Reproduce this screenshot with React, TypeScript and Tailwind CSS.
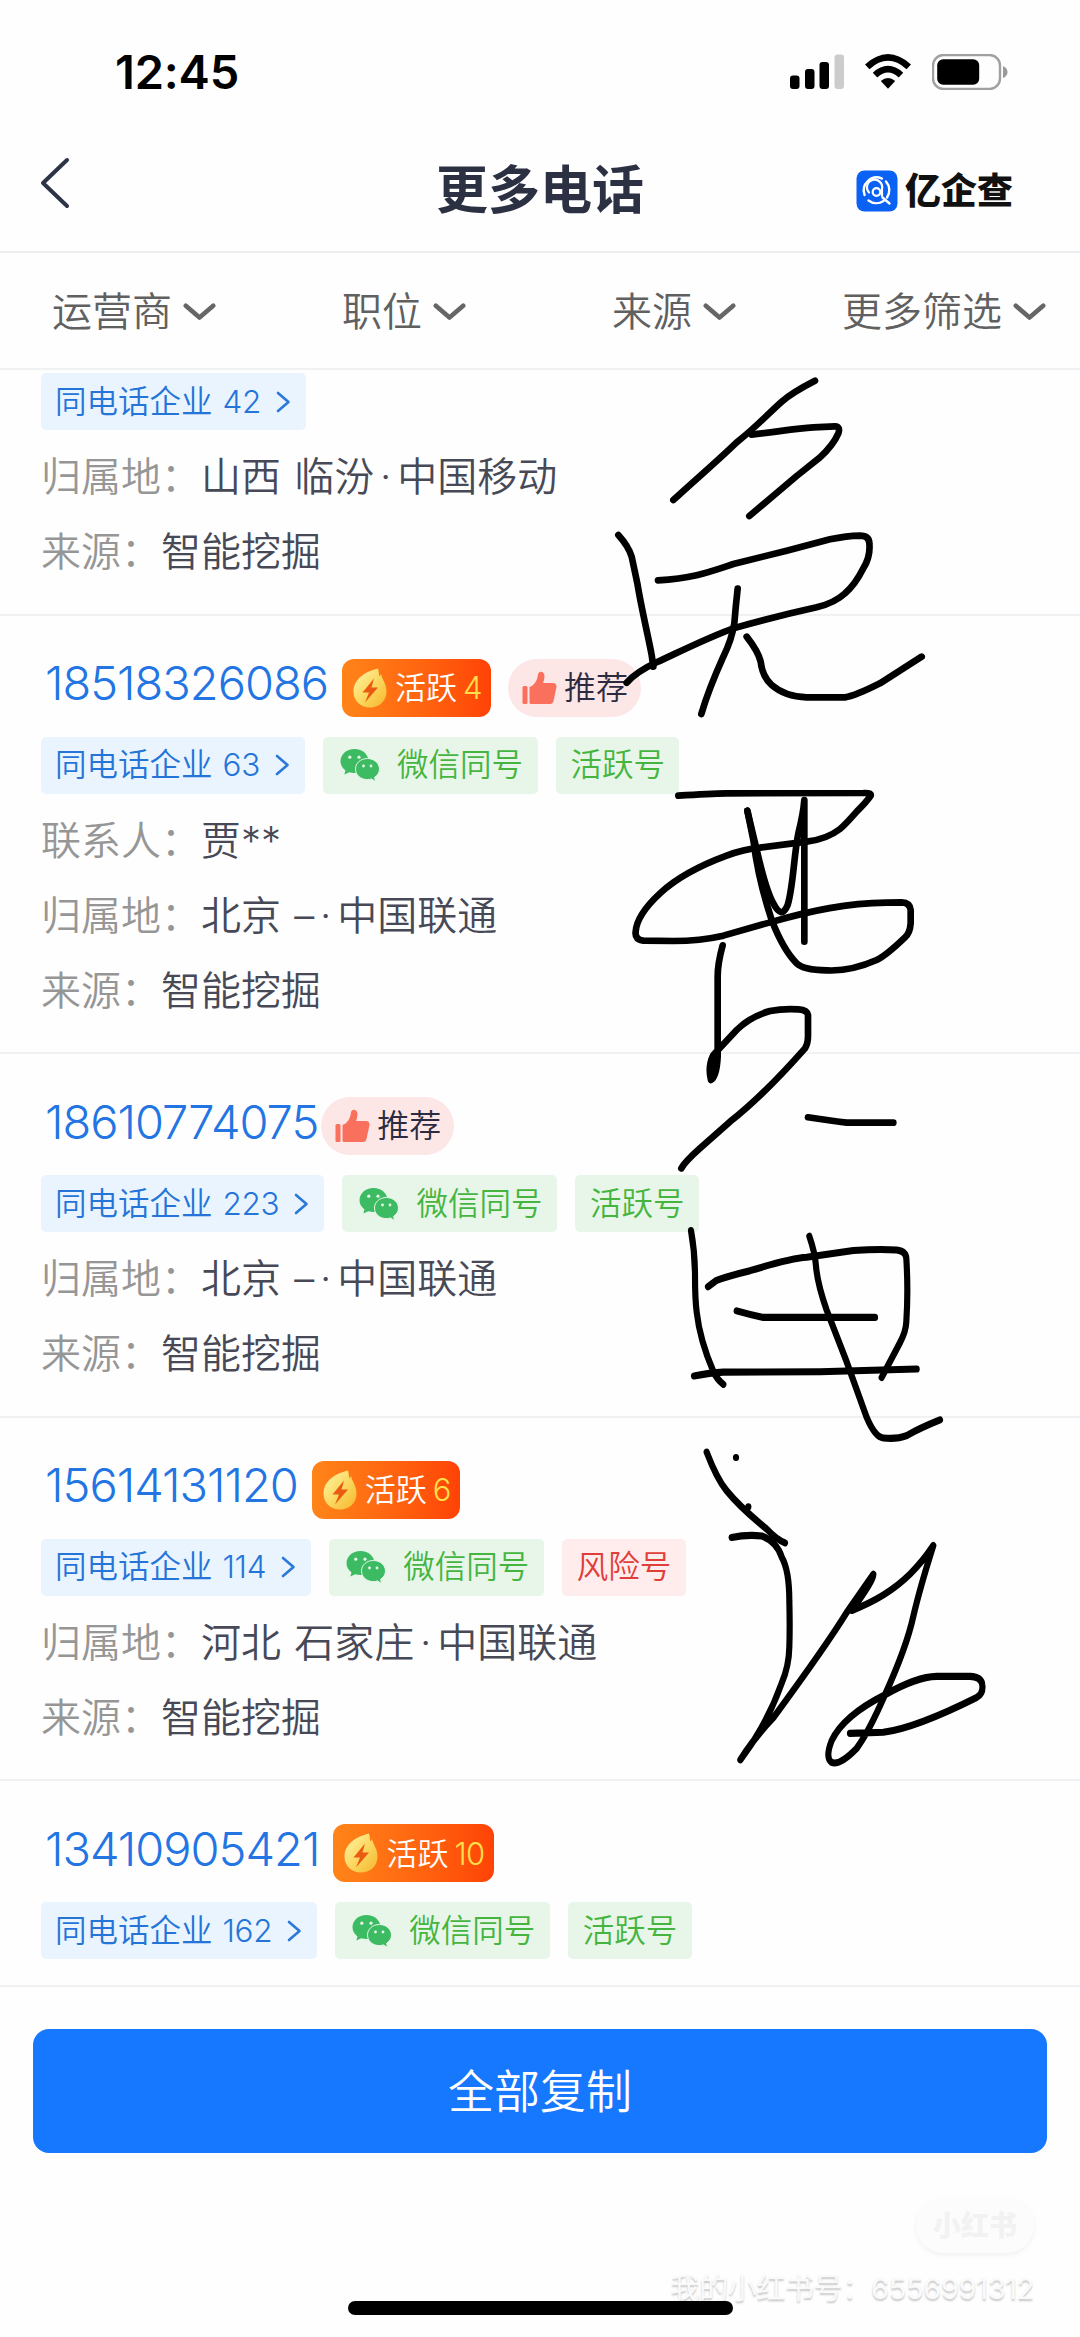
import React from 'react';

interface Tag {
  kind: 'wechat' | 'active' | 'risk';
  label: string;
}

interface PhoneRecord {
  phone?: string;
  active?: number;
  recommended?: boolean;
  companies: number;
  tags: Tag[];
  contact?: string;
  region?: string;
  carrier?: string;
  source?: string;
}

const WECHAT: Tag = { kind: 'wechat', label: '微信同号' };
const ACTIVE: Tag = { kind: 'active', label: '活跃号' };
const RISK: Tag = { kind: 'risk', label: '风险号' };

const filters = ['运营商', '职位', '来源', '更多筛选'];

const records: PhoneRecord[] = [
  { companies: 42, tags: [], region: '山西 临汾', carrier: '中国移动', source: '智能挖掘' },
  {
    phone: '18518326086',
    active: 4,
    recommended: true,
    companies: 63,
    tags: [WECHAT, ACTIVE],
    contact: '贾**',
    region: '北京 –',
    carrier: '中国联通',
    source: '智能挖掘',
  },
  {
    phone: '18610774075',
    recommended: true,
    companies: 223,
    tags: [WECHAT, ACTIVE],
    region: '北京 –',
    carrier: '中国联通',
    source: '智能挖掘',
  },
  {
    phone: '15614131120',
    active: 6,
    companies: 114,
    tags: [WECHAT, RISK],
    region: '河北 石家庄',
    carrier: '中国联通',
    source: '智能挖掘',
  },
  { phone: '13410905421', active: 10, companies: 162, tags: [WECHAT, ACTIVE] },
];

const StatusBar = () => (
  <div className="flex h-[144px] items-center justify-between pr-[72px] pl-[115px]">
    <span className="pb-[2px] text-[47px] leading-none font-semibold tracking-[-0.2px] text-black">12:45</span>
    <div className="flex items-center">
      <svg width="54" height="36" viewBox="0 0 54 36" className="mr-[21px]">
        <rect x="0" y="21.5" width="9.5" height="13.5" rx="3" />
        <rect x="15" y="15" width="9.5" height="20" rx="3" />
        <rect x="29.5" y="8" width="9.5" height="27" rx="3" />
        <rect x="44.5" y="0.5" width="9.5" height="34.5" rx="3" fill="#cccccc" />
      </svg>
      <svg width="46" height="36" viewBox="0 0 46 36" className="mr-[21px]">
        <path d="M0 10.5 Q23 -10.5 46 10.5 L41.5 15.2 Q23 -1.5 4.5 15.2 Z" />
        <path d="M7.8 18.7 Q23 5 38.2 18.7 L33.7 23.4 Q23 13.8 12.3 23.4 Z" />
        <path d="M15.8 27 Q23 20.8 30.2 27 L23 34.8 Z" />
      </svg>
      <svg width="76" height="36" viewBox="0 0 76 36">
        <rect x="1" y="1" width="67" height="34" rx="10.5" fill="none" stroke="#a0a0a0" strokeWidth="2.4" />
        <rect x="5.2" y="5.2" width="42" height="25.6" rx="6" />
        <path d="M71 12 Q75.5 14 75.5 18 Q75.5 22 71 24 Z" fill="#999999" />
      </svg>
    </div>
  </div>
);

const BrandLogo = () => (
  <div className="flex items-center gap-[7px]">
    <svg width="42" height="42" viewBox="0 0 42 42" fill="none" stroke="#ffffff" strokeLinecap="round">
      <rect x="0.5" y="0.5" width="41" height="41" rx="8" fill="#0a62f5" stroke="none" />
      <path d="M8.6 25 A13 13 0 0 1 26 8.6" strokeWidth="2.4" />
      <path d="M30 11.5 A13 13 0 0 1 31 27.5" strokeWidth="2.4" />
      <path d="M12.5 30.5 A13 13 0 0 0 27.5 31 M26.5 27.5 L33.5 33.5" strokeWidth="2.4" />
      <circle cx="20.5" cy="22" r="3.8" strokeWidth="2.2" />
      <path d="M13 22.5 A7.6 7.6 0 1 1 26 19 V26" strokeWidth="2.2" />
    </svg>
    <span className="text-[36px] leading-[42px] font-black text-[#111111]">亿企查</span>
  </div>
);

const Header = () => (
  <header className="grid h-[109px] grid-cols-3 items-center border-b-2 border-[#eceeef] pb-[13px]">
    <div className="pl-[40px]">
      <svg width="30" height="52" viewBox="0 0 30 52" fill="none" className="mb-[17px]">
        <path d="M27 3 L3 26 L27 49" stroke="#2d3446" strokeWidth="4" strokeLinecap="round" strokeLinejoin="round" />
      </svg>
    </div>
    <h1 className="text-center text-[52px] leading-[56px] font-bold whitespace-nowrap text-[#2b3142]">更多电话</h1>
    <div className="flex justify-end pr-[67px] pb-[1px]">
      <BrandLogo />
    </div>
  </header>
);

const FilterBar = () => (
  <div className="grid h-[117px] grid-cols-4 border-b-2 border-[#f0f1f2] pt-[2px]">
    {filters.map((name) => (
      <button key={name} className="flex items-center justify-center gap-[11px] pr-[2px] text-[40px] font-[350] text-[#606060]">
        {name}
        <svg width="33" height="18" viewBox="0 0 33 18" fill="none">
          <path d="M2.8 2.8 L16.5 14.5 L30.2 2.8" stroke="#666666" strokeWidth="4.6" strokeLinecap="round" strokeLinejoin="round" />
        </svg>
      </button>
    ))}
  </div>
);

const FlameIcon = () => (
  <svg width="34" height="40" viewBox="0 0 34 40">
    <defs>
      <linearGradient id="flame" x1="0" y1="0" x2="1" y2="1">
        <stop offset="0" stopColor="#fff6a8" />
        <stop offset="0.55" stopColor="#fbd65c" />
        <stop offset="1" stopColor="#f5b52c" />
      </linearGradient>
    </defs>
    <path
      d="M25 0.5 C26 3.5 25.500 6 26.5 8.5 C27.500 7.500 28 6.500 28 5.5 C28.5 11 33.5 15 33.5 23.5 C33.5 33 26.5 39.5 17 39.5 C7.5 39.5 0.5 33 0.5 23.5 C0.5 10 14 3 25 0.5 Z"
      fill="url(#flame)"
    />
    <path d="M21 10.500 L9.5 24.500 H16 L12 34.500 L25 19.500 H18.500 Z" fill="#ea5a12" />
  </svg>
);

const ThumbIcon = () => (
  <svg width="35" height="34" viewBox="0 0 35 34" fill="#f9705c">
    <rect x="0.5" y="15" width="5" height="18" rx="1.5" />
    <path d="M7.500 16 C12.500 14.500 15.500 9 16 3.500 C16.500 0 22 -0.5 22.5 5 C22.5 8 21.5 10 21.2 12 H31 C34 12 35 14.5 34.3 17 L31.5 30 C31 32 30 33 28 33 H9.500 C8 33 7.500 32.5 7.500 31 Z" />
  </svg>
);

const WechatIcon = () => (
  <svg width="40" height="34" viewBox="0 0 40 34">
    <path
      d="M14.5 1 C6.5 1 0.5 6.5 0.5 13.2 C0.5 17 2.5 20.2 5.5 22.4 L4.3 26.5 L9.3 24.2 C11 24.7 12.6 25 14.5 25 C22.5 25 28.5 19.8 28.5 13.2 C28.5 6.5 22.5 1 14.5 1 Z"
      fill="#3dbb63"
    />
    <path
      d="M27.500 10.5 C20.500 10.5 15.500 15.2 15.500 21 C15.500 27 20.500 31.6 27.500 31.6 C29 31.6 30 31.3 31.4 30.9 L35.6 33.5 L34.6 29.3 C37.7 27.3 39.5 24.3 39.5 21 C39.5 15.2 34 10.5 27.500 10.5 Z"
      fill="#3dbb63"
      stroke="#e8f6ea"
      strokeWidth="1"
    />
    <circle cx="9.8" cy="9.2" r="1.6" fill="#e8f6ea" />
    <circle cx="19" cy="9.2" r="1.6" fill="#e8f6ea" />
    <circle cx="23.500" cy="18" r="1.4" fill="#e8f6ea" />
    <circle cx="31" cy="18" r="1.4" fill="#e8f6ea" />
  </svg>
);

const ActiveBadge = ({ level }: { level: number }) => (
  <span className="ml-[14px] flex h-[58px] items-center rounded-[12px] bg-gradient-to-r from-[#ff8419] to-[#ff4206] pr-[9px] pl-[11px] text-[31px] leading-none font-[350] text-white">
    <FlameIcon />
    <span className="ml-[8px]">活跃</span>
    <span className="ml-[6px] tracking-[-0.5px] text-[#ffe04a]">{level}</span>
  </span>
);

const RecommendBadge = () => (
  <span className="flex h-[58px] items-center gap-[7px] rounded-full bg-[#fde6e6] pr-[13px] pl-[14px] text-[32px] leading-none font-[350] text-[#2c2c40]">
    <ThumbIcon />
    推荐
  </span>
);

const CompanyChip = ({ count }: { count: number }) => (
  <span className="flex h-[57px] items-center rounded-[5px] bg-[#eaf4ff] pr-[15px] pl-[14px] text-[31.5px] leading-none font-[350] text-[#2575d9]">
    同电话企业
    <span className="ml-[10px] tracking-[-0.3px]">{count}</span>
    <svg width="15" height="22" viewBox="0 0 15 22" fill="none" className="ml-[15px]">
      <path d="M2 2 L12.5 11 L2 20" stroke="#2a78d8" strokeWidth="2.6" strokeLinecap="round" strokeLinejoin="round" />
    </svg>
  </span>
);

const TagChip = ({ tag }: { tag: Tag }) => {
  if (tag.kind === 'wechat') {
    return (
      <span className="flex h-[57px] items-center gap-[17px] rounded-[5px] bg-[#e8f6ea] pr-[15px] pl-[17px] text-[31.5px] leading-none font-[350] text-[#45b540]">
        <WechatIcon />
        {tag.label}
      </span>
    );
  }
  return (
    <span
      className={`flex h-[57px] items-center rounded-[5px] px-[14.5px] text-[31.5px] leading-none font-[350] ${
        tag.kind === 'risk' ? 'bg-[#ffecec] text-[#df3e39]' : 'bg-[#e8f6ea] text-[#45b540]'
      }`}
    >
      {tag.label}
    </span>
  );
};

const InfoRow = ({ label, children }: { label: string; children: React.ReactNode }) => (
  <div className="flex h-[75px] items-center text-[40px] leading-none font-[350] whitespace-pre">
    <span className="text-[#969696]">{label}：</span>
    <span className="[word-spacing:2px] text-[#474957]">{children}</span>
  </div>
);

const RecordItem = ({ record }: { record: PhoneRecord }) => (
  <li className={`border-b-2 border-[#f0f1f2] pl-[41px] ${record.phone ? 'pt-[43px]' : 'pt-[3px]'} ${record.source ? 'pb-[24px]' : 'pb-[26px]'}`}>
    {record.phone && (
      <div className="mb-[20px] flex h-[58px] items-center">
        <span className="pb-[10px] pl-[4px] text-[47px] leading-none font-[350] tracking-[-1px] text-[#2275e2]">{record.phone}</span>
        {record.active && <ActiveBadge level={record.active} />}
        {record.recommended && (
          <div className={record.active ? 'ml-[17px]' : 'ml-[3px]'}>
            <RecommendBadge />
          </div>
        )}
      </div>
    )}
    <div className="flex gap-[18px]">
      <CompanyChip count={record.companies} />
      {record.tags.map((tag) => (
        <TagChip key={tag.label} tag={tag} />
      ))}
    </div>
    {record.source && (
      <div className="mt-[9.5px]">
        {record.contact && <InfoRow label="联系人">{record.contact}</InfoRow>}
        <InfoRow label="归属地">
          {record.region}
          <span className="inline-block w-[23px] text-center">·</span>
          {record.carrier}
        </InfoRow>
        <InfoRow label="来源">{record.source}</InfoRow>
      </div>
    )}
  </li>
);

// Freehand ink, one group per region of the page
const Scribble = () => (
  <svg
    className="pointer-events-none absolute inset-0"
    width="1080"
    height="2337"
    viewBox="0 0 1080 2337"
    fill="none"
    stroke="#000000"
    strokeLinecap="round"
    strokeLinejoin="round"
  >
    <g transform="translate(600 360) scale(0.33333)" strokeWidth="20">
      <path d="M645 62 C610 80 575 98 545 125 C500 165 470 200 410 247 C345 310 290 355 220 420" />
      <path d="M455 224 C540 214 590 205 640 202 L705 199 Q722 200 715 220 Q700 255 660 292 L590 348 L448 468" />
      <path d="M55 525 Q85 558 95 590 L112 670 C125 750 145 830 155 885 L160 920" />
      <path d="M174 661 C280 655 330 635 400 612 L560 572 L690 538 Q740 528 780 527 Q807 527 808 550 Q812 590 790 625 Q765 675 735 700 Q705 728 650 742 C560 762 470 785 400 805 C330 830 260 865 170 907 Q110 935 80 968" />
      <path d="M413 686 Q407 740 403 790 Q395 840 370 890 Q325 990 304 1062" />
      <path d="M440 830 Q475 875 482 905 Q487 950 515 975 Q555 1010 620 1012 L735 1012 Q765 1008 840 970 L965 890" />
    </g>
    <g transform="translate(600 760) scale(0.33333)" strokeWidth="20">
      <path d="M235 107 Q330 101 380 100 L790 99 Q820 98 810 110 Q800 125 770 155 Q735 195 720 207 Q680 238 620 245 L480 263 Q430 268 380 287 Q250 335 180 400 Q110 465 107 515 Q104 538 130 542 L220 543 Q300 543 370 527 L510 487 C640 450 740 430 860 428 L905 427 Q930 428 932 450 L932 490 Q930 520 915 532 Q860 585 830 600 Q750 635 680 631 Q610 630 590 610 Q550 570 515 480 Q475 360 460 240 L442 152" />
      <path d="M442 152 L475 290 Q500 395 520 430 Q545 480 563 435 C580 380 582 280 595 220 Q610 160 613 120 L613 545" />
      <path d="M368 556 Q353 610 353 650 L353 890 Q350 950 333 960 Q323 920 340 885 L410 810 Q450 770 510 753 Q550 745 595 748 Q622 750 624 765 L624 820 Q625 850 615 865 C540 950 460 1030 390 1085 L300 1165 Q255 1205 244 1225" />
      <path d="M624 1072 Q700 1084 740 1088 L880 1088" />
    </g>
    <g transform="translate(600 1180) scale(0.33333 0.38270)" strokeWidth="18.5">
      <path d="M273 132 Q285 190 285 250 Q285 310 290 345 Q300 420 340 500 Q350 520 370 534" />
      <path d="M324 279 L350 262 Q380 252 450 237 Q570 205 620 202 L760 184 Q840 180 890 183 Q918 186 919 205 Q925 290 919 370 Q918 395 900 425 L845 516" />
      <path d="M410 342 Q450 352 490 359 L825 359" />
      <path d="M282 512 Q330 504 370 502 L660 501 L950 494" />
      <path d="M628 147 Q645 190 648 225 Q652 270 680 340 L740 475 L800 620 Q825 672 850 674 Q890 678 920 668 Q960 648 1020 627" />
      <path d="M320 711 Q350 780 380 812 Q420 855 500 912 Q530 940 555 948" />
      <path d="M408 725 h0.1 M445 854 h0.1" />
      <path d="M395 934 Q440 926 485 930 Q530 945 545 985 Q568 1020 568 1100 Q570 1170 568 1220 Q567 1270 545 1315 Q500 1425 421 1515 Q460 1460 520 1405 C600 1310 680 1215 740 1130 L820 1030 Q825 1040 755 1125 Q860 1090 930 1030 Q970 995 1000 955 Q960 1065 940 1140 Q920 1220 855 1345 Q805 1445 770 1485 Q720 1530 695 1522 Q675 1510 695 1465 Q730 1400 855 1345 Q950 1298 1010 1297 L1110 1297 Q1145 1298 1147 1320 Q1150 1342 1130 1352 C1020 1400 920 1435 850 1443 L750 1446" />
    </g>
  </svg>
);

export default function App() {
  return (
    <div className="relative flex h-[2337px] w-[1080px] flex-col overflow-hidden bg-[#fefefe] font-[Inter,'Noto_Sans_CJK_SC',sans-serif]">
      <StatusBar />
      <Header />
      <FilterBar />

      <ul>
        {records.map((record) => (
          <RecordItem key={record.phone ?? 'first'} record={record} />
        ))}
      </ul>

      <div className="px-[33px] pt-[42px]">
        <button className="h-[124px] w-full rounded-[16px] bg-[#1677ff] text-[46px] font-[350] text-white">全部复制</button>
      </div>

      <div className="mt-[45px] flex flex-col items-end pr-[46px]">
        <span className="flex h-[55px] w-[118px] items-center justify-center rounded-full bg-[#fcfcfc] text-[28px] font-black text-[#f2f2f2] shadow-[0_2px_5px_rgba(0,0,0,0.06)]">
          小红书
        </span>
        <span className="mt-[18px] text-[29px] leading-[36px] tracking-[-0.35px] whitespace-nowrap text-[#fafafa] [text-shadow:0_2px_2px_rgba(0,0,0,0.22)]">
          我的小红书号：6556991312
        </span>
      </div>

      <div className="absolute bottom-[22px] left-[348px] h-[14px] w-[385px] rounded-full bg-black" />
      <Scribble />
    </div>
  );
}
